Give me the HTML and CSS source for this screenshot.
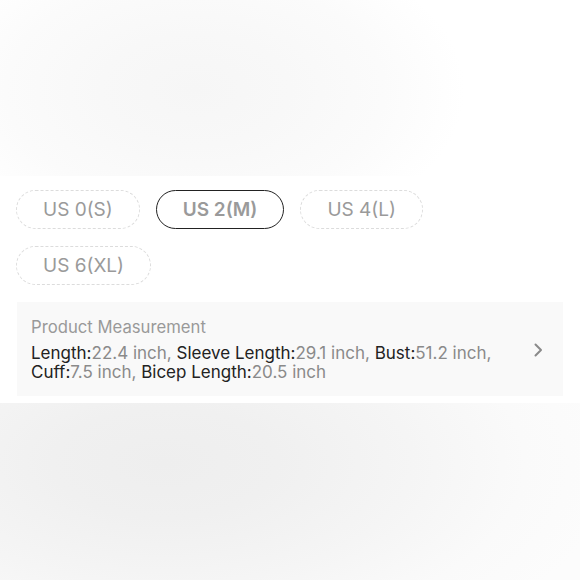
FILE: index.html
```html
<!DOCTYPE html>
<html lang="en">
<head>
<meta charset="utf-8">
<title>Size selector</title>
<link rel="stylesheet" href="styles.css">
</head>
<body>
<div class="page">
  <div class="hero"></div>
  <section class="panel">
    <div class="sizes">
      <button class="chip">US 0(S)</button>
      <button class="chip selected">US 2(M)</button>
      <button class="chip">US 4(L)</button>
      <button class="chip">US 6(XL)</button>
    </div>
    <div class="measure">
      <div class="measure-text">
        <div class="measure-title">Product Measurement</div>
        <div class="measure-body"><span class="k">Length:</span><span class="v">22.4 inch, </span><span class="k">Sleeve Length:</span><span class="v">29.1 inch, </span><span class="k">Bust:</span><span class="v">51.2 inch, </span><span class="k">Cuff:</span><span class="v">7.5 inch, </span><span class="k">Bicep Length:</span><span class="v">20.5 inch</span></div>
      </div>
      <svg class="chev" width="10" height="14" viewBox="0 0 10 14" aria-hidden="true">
        <path d="M2.5 1.5 L8 7 L2.5 12.5" fill="none" stroke="#8a8a8a" stroke-width="2" stroke-linecap="round" stroke-linejoin="round"/>
      </svg>
    </div>
  </section>
  <div class="footer"></div>
</div>
</body>
</html>
```

FILE: styles.css
```css
* { box-sizing: border-box; }
html, body { margin: 0; padding: 0; }
body {
  font-family: Inter, "Noto Sans", "Liberation Sans", sans-serif;
  background: #fff;
  width: 580px;
  height: 580px;
  overflow: hidden;
}
.page {
  display: flex;
  flex-direction: column;
  height: 580px;
}
.hero {
  height: 176px;
  flex: none;
  background: radial-gradient(ellipse 270px 160px at 195px 90px, #f6f6f6 0%, #f8f8f8 35%, #fbfbfb 70%, #ffffff 100%);
}
.panel {
  background: #fff;
  padding: 14px 17px 7px 17px;
}
.sizes {
  display: flex;
  flex-wrap: wrap;
  gap: 17px 16px;
  margin-left: -1px;
}
.chip {
  height: 39px;
  padding: 0 26px;
  border: 1px dashed #dcdcdc;
  border-radius: 20px;
  background: #fff;
  color: #9a9a9a;
  font-family: inherit;
  font-size: 19px;
  font-weight: 400;
  display: inline-flex;
  align-items: center;
  cursor: pointer;
}
.chip.selected {
  border: 1.5px solid #222;
  font-weight: 600;
  color: #9a9a9a;
}
.measure {
  margin-top: 17px;
  background: #f9f9f9;
  padding: 16px 20px 13px 14px;
  display: flex;
  align-items: center;
  width: 546px;
}
.measure-text {
  flex: 1;
  font-size: 17px;
  line-height: 19.5px;
}
.measure-title {
  color: #999;
  font-size: 16.7px;
  margin-bottom: 6px;
}
.measure-body {
  width: 480px;
}
.k { color: #222; }
.v { color: #8a8a8a; }
.chev { flex: none; margin-left: 0; }
.footer {
  flex: 1;
  background: radial-gradient(ellipse 450px 220px at 165px 60px, #eeeeee 0%, #f0f0f0 25%, #f5f5f5 55%, #fafafa 80%, #fcfcfc 100%);
}
```
